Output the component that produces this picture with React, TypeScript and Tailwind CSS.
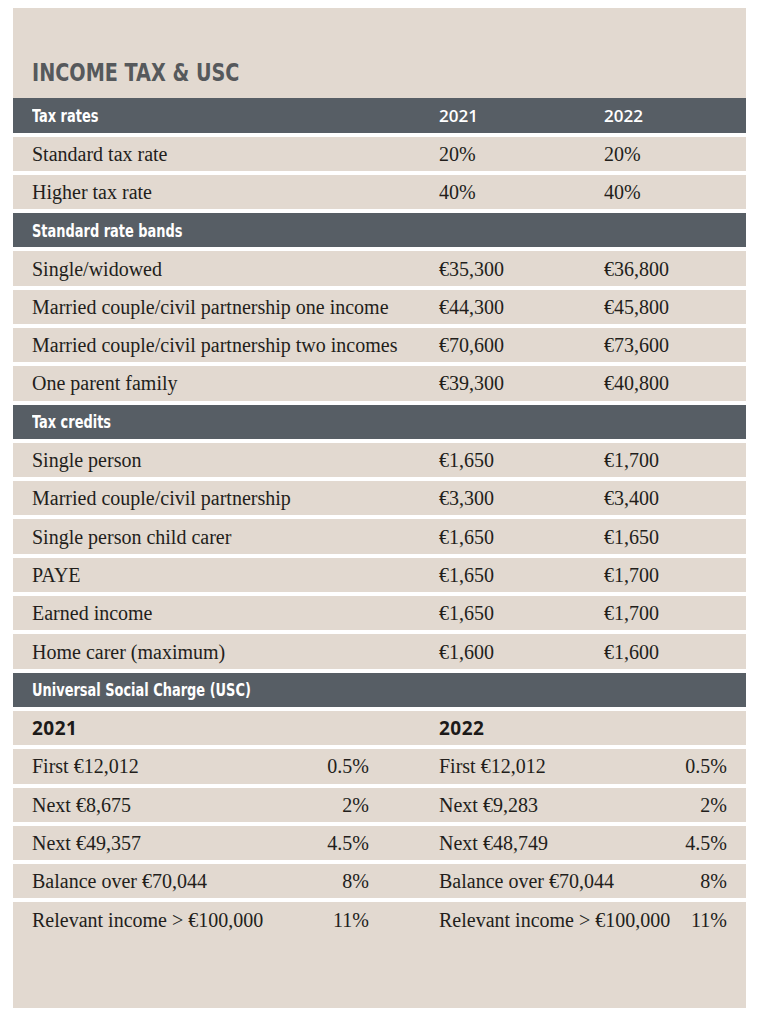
const serif = "font-['Liberation_Serif',serif]";
const narrow = "font-['Liberation_Sans_Narrow','DejaVu_Sans_Condensed',sans-serif]";
const gothic = "font-['Open_Sans','Liberation_Sans',sans-serif]";

const sections: Array<{ title: string; years?: boolean; rows: Array<[string, string, string]> }> = [
  {
    title: "Tax rates",
    years: true,
    rows: [
      ["Standard tax rate", "20%", "20%"],
      ["Higher tax rate", "40%", "40%"],
    ],
  },
  {
    title: "Standard rate bands",
    rows: [
      ["Single/widowed", "€35,300", "€36,800"],
      ["Married couple/civil partnership one income", "€44,300", "€45,800"],
      ["Married couple/civil partnership two incomes", "€70,600", "€73,600"],
      ["One parent family", "€39,300", "€40,800"],
    ],
  },
  {
    title: "Tax credits",
    rows: [
      ["Single person", "€1,650", "€1,700"],
      ["Married couple/civil partnership", "€3,300", "€3,400"],
      ["Single person child carer", "€1,650", "€1,650"],
      ["PAYE", "€1,650", "€1,700"],
      ["Earned income", "€1,650", "€1,700"],
      ["Home carer (maximum)", "€1,600", "€1,600"],
    ],
  },
];

const usc: Array<[string, string, string, string]> = [
  ["First €12,012", "0.5%", "First €12,012", "0.5%"],
  ["Next €8,675", "2%", "Next €9,283", "2%"],
  ["Next €49,357", "4.5%", "Next €48,749", "4.5%"],
  ["Balance over €70,044", "8%", "Balance over €70,044", "8%"],
  ["Relevant income > €100,000", "11%", "Relevant income > €100,000", "11%"],
];

function HeaderBar({ title, years, first }: { title: string; years?: boolean; first?: boolean }) {
  return (
    <div className={`flex items-center bg-[#575e65] text-white ${first ? "h-[34.5px]" : "h-[38.3px] border-t-4 border-white"}`}>
      <div className={`w-[407px] pl-[19px] text-[18px] font-bold ${narrow}`}>
        <span className="inline-block origin-left scale-x-[0.8] whitespace-nowrap">{title}</span>
      </div>
      {years ? (
        <>
          <div className={`w-[165px] pl-[19px] text-[17px] font-semibold ${gothic}`}>2021</div>
          <div className={`pl-[19px] text-[17px] font-semibold ${gothic}`}>2022</div>
        </>
      ) : null}
    </div>
  );
}

export default function App() {
  return (
    <div className="min-h-[1024px] w-[757px] bg-white pt-[8px] pl-[13px]">
      <div className="h-[1000px] w-[733px] bg-[#e2d9d0] pt-[50px]">
        <h1 className={`mb-[10px] h-[30px] pl-[19px] text-[24px] font-bold leading-[30px] text-[#56595c] ${narrow}`}>
          <span className="inline-block origin-left scale-x-[0.89] whitespace-nowrap">INCOME TAX &amp; USC</span>
        </h1>

        {sections.map((section, si) => (
          <div key={section.title}>
            <HeaderBar title={section.title} years={section.years} first={si === 0} />
            {section.rows.map((row) => (
              <div key={row[0]} className={`flex h-[38.3px] items-center border-t-4 border-white text-[20px] text-[#221e1b] ${serif}`}>
                <div className="w-[407px] pl-[19px]">{row[0]}</div>
                <div className="w-[165px] pl-[19px]">{row[1]}</div>
                <div className="pl-[19px]">{row[2]}</div>
              </div>
            ))}
          </div>
        ))}

        <HeaderBar title="Universal Social Charge (USC)" />
        <div className={`flex h-[38.3px] items-center border-t-4 border-white text-[19px] font-bold tracking-[0.5px] text-[#1c1a19] ${gothic}`}>
          <div className="w-[407px] pl-[19px]">2021</div>
          <div className="pl-[19px]">2022</div>
        </div>
        {usc.map((row, i) => (
          <div key={i} className={`flex h-[38.3px] items-center border-t-4 border-white text-[20px] text-[#221e1b] ${serif}`}>
            <div className="flex w-[407px] justify-between pl-[19px] pr-[51px]">
              <span>{row[0]}</span>
              <span>{row[1]}</span>
            </div>
            <div className="flex flex-1 justify-between pl-[19px] pr-[19px]">
              <span>{row[2]}</span>
              <span>{row[3]}</span>
            </div>
          </div>
        ))}
      </div>
    </div>
  );
}
